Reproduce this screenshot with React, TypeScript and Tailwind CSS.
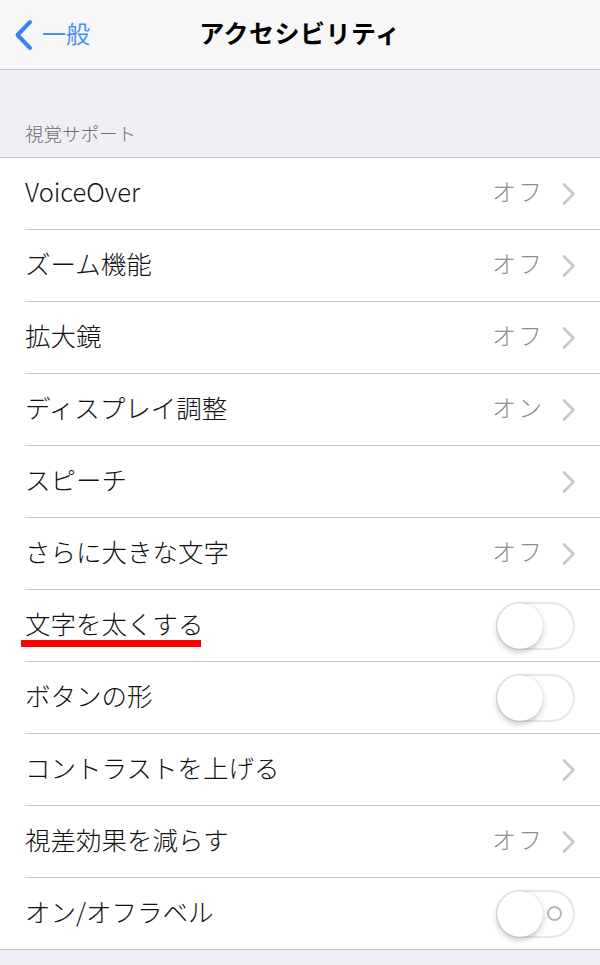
type Row = {
  label: string;
  value?: string;
  chevron?: boolean;
  toggle?: boolean;
  labels?: boolean;
  mark?: boolean;
};

const rows: Row[] = [
  { label: 'VoiceOver', value: 'オフ', chevron: true },
  { label: 'ズーム機能', value: 'オフ', chevron: true },
  { label: '拡大鏡', value: 'オフ', chevron: true },
  { label: 'ディスプレイ調整', value: 'オン', chevron: true },
  { label: 'スピーチ', chevron: true },
  { label: 'さらに大きな文字', value: 'オフ', chevron: true },
  { label: '文字を太くする', toggle: true, mark: true },
  { label: 'ボタンの形', toggle: true },
  { label: 'コントラストを上げる', chevron: true },
  { label: '視差効果を減らす', value: 'オフ', chevron: true },
  { label: 'オン/オフラベル', toggle: true, labels: true },
];

function Chevron() {
  return (
    <svg width="14" height="24" viewBox="0 0 14 24" className="ml-[18px]">
      <polyline
        points="2,2.5 11.5,12 2,21.5"
        fill="none"
        stroke="#c7c7cc"
        strokeWidth="2.6"
        strokeLinecap="round"
        strokeLinejoin="round"
      />
    </svg>
  );
}

function Toggle({ labels }: { labels?: boolean }) {
  return (
    <div className="relative w-[79px] h-[48px] rounded-full border-2 border-[#e6e6e6] bg-white mr-[1px]">
      {labels && (
        <div className="absolute right-[11px] top-[14px] w-[15px] h-[15px] rounded-full border-2 border-[#b5b5b5]" />
      )}
      <div className="absolute left-[-1px] top-[-1px] w-[46px] h-[46px] rounded-full bg-white shadow-[0_3px_6px_rgba(0,0,0,0.22),0_0_1px_rgba(0,0,0,0.2)]" />
    </div>
  );
}

export default function App() {
  return (
    <div
      className="w-[600px] h-[965px] bg-[#efeff4] overflow-hidden"
      style={{ fontFamily: '"Noto Sans CJK JP", "Noto Sans", sans-serif' }}
    >
      <div className="relative h-[70px] bg-[#f7f7f7] border-b border-[#c4c4c7] flex items-center justify-center">
        <div className="absolute left-[14px] top-0 h-[69px] flex items-center">
          <svg width="20" height="32" viewBox="0 0 20 32">
            <polyline
              points="16,3 3.5,16 16,29"
              fill="none"
              stroke="#3a83f6"
              strokeWidth="4"
              strokeLinecap="round"
              strokeLinejoin="round"
            />
          </svg>
          <span className="ml-[8px] mb-[4px] text-[24px] leading-none text-[#4a8ff7]">一般</span>
        </div>
        <span className="mb-[4px] text-[25px] font-bold leading-none text-black tracking-[0.5px]">
          アクセシビリティ
        </span>
      </div>

      <div className="h-[87px] flex items-end pl-[25px] pb-[15px]">
        <span className="text-[18.5px] font-light leading-none text-[#6d6d72]">視覚サポート</span>
      </div>

      <div className="bg-white border-t border-b border-[#c8c7cc]">
        {rows.map((r, i) => (
          <div key={r.label} className="pl-[25px]">
            <div
              className={`relative flex items-center pr-[24px] ${
                i < rows.length - 1 ? 'h-[72px] border-b border-[#c8c7cc]' : 'h-[71px]'
              }`}
            >
              <span className="flex-1 mb-[6px] text-[25.5px] font-light leading-none text-[#111]">
                {r.label}
              </span>
              {r.mark && (
                <div className="absolute left-[-4px] top-[50px] w-[180px] h-[7px] bg-[#ff0000]" />
              )}
              {r.value && (
                <span className="mb-[6px] text-[24px] font-light leading-none text-[#8e8e93] tracking-[2px]">
                  {r.value}
                </span>
              )}
              {r.chevron && <Chevron />}
              {r.toggle && <Toggle labels={r.labels} />}
            </div>
          </div>
        ))}
      </div>
    </div>
  );
}
